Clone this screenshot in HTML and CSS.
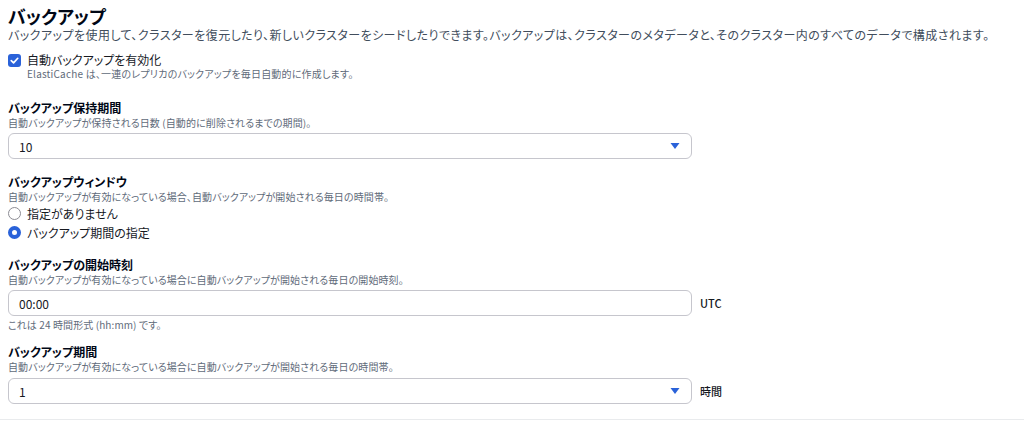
FILE: index.html
```html
<!DOCTYPE html>
<html lang="ja">
<head>
<meta charset="utf-8">
<link rel="stylesheet" href="styles.css">
</head>
<body>
<div class="page">
  <h1 class="title">バックアップ</h1>
  <p class="desc">バックアップを使用して、クラスターを復元したり、新しいクラスターをシードしたりできます。バックアップは、クラスターのメタデータと、そのクラスター内のすべてのデータで構成されます。</p>

  <div class="check-row">
    <span class="checkbox">
      <svg viewBox="0 0 14 14" width="14" height="14"><path d="M3.5 7.2 L6 9.6 L10.5 4.6" fill="none" stroke="#fff" stroke-width="1.8" stroke-linecap="round" stroke-linejoin="round"/></svg>
    </span>
    <span class="check-label">自動バックアップを有効化</span>
  </div>
  <div class="check-sub">ElastiCache は、一連のレプリカのバックアップを毎日自動的に作成します。</div>

  <div class="field f1">
    <div class="label">バックアップ保持期間</div>
    <div class="hint">自動バックアップが保持される日数 (自動的に削除されるまでの期間)。</div>
    <div class="control-row">
      <div class="select">
        <span class="value">10</span>
        <svg class="caret" viewBox="0 0 10 8" width="10" height="8"><path d="M0.5 1 L9.5 1 L5 7 Z" fill="#2a62d9"/></svg>
      </div>
    </div>
  </div>

  <div class="field f2">
    <div class="label">バックアップウィンドウ</div>
    <div class="hint">自動バックアップが有効になっている場合、自動バックアップが開始される毎日の時間帯。</div>
    <div class="radio-row"><span class="radio"></span><span class="radio-label">指定がありません</span></div>
    <div class="radio-row"><span class="radio checked"></span><span class="radio-label">バックアップ期間の指定</span></div>
  </div>

  <div class="field f3">
    <div class="label">バックアップの開始時刻</div>
    <div class="hint">自動バックアップが有効になっている場合に自動バックアップが開始される毎日の開始時刻。</div>
    <div class="control-row">
      <div class="input"><span class="value">00:00</span></div>
      <span class="unit">UTC</span>
    </div>
    <div class="hint after">これは 24 時間形式 (hh:mm) です。</div>
  </div>

  <div class="field f4">
    <div class="label">バックアップ期間</div>
    <div class="hint">自動バックアップが有効になっている場合に自動バックアップが開始される毎日の時間帯。</div>
    <div class="control-row">
      <div class="select">
        <span class="value">1</span>
        <svg class="caret" viewBox="0 0 10 8" width="10" height="8"><path d="M0.5 1 L9.5 1 L5 7 Z" fill="#2a62d9"/></svg>
      </div>
      <span class="unit">時間</span>
    </div>
  </div>
</div>
<div class="divider"></div>
</body>
</html>
```
FILE: styles.css
```css
html, body {
  margin: 0;
  padding: 0;
  background: #ffffff;
}
body {
  font-family: "Noto Sans CJK JP", "Noto Sans", sans-serif;
  color: #16191f;
  font-feature-settings: "palt";
}
.page {
  padding: 4px 8px 0;
}
.title {
  margin: 0;
  font-size: 18px;
  line-height: 24px;
  font-weight: 700;
  color: #000716;
}
.desc {
  margin: 0;
  font-size: 12px;
  line-height: 14px;
  letter-spacing: 0.45px;
  color: #414d5c;
}
.check-row {
  margin-top: 10px;
  display: flex;
  align-items: center;
  gap: 6px;
  height: 16px;
}
.checkbox {
  width: 13px;
  height: 13px;
  border-radius: 3px;
  background: #2a62d9;
  display: flex;
  align-items: center;
  justify-content: center;
}
.checkbox svg {
  width: 13px;
  height: 13px;
}
.check-label {
  font-size: 12px;
  line-height: 16px;
  color: #16191f;
}
.check-sub {
  margin-left: 19px;
  font-size: 10px;
  line-height: 12px;
  letter-spacing: 0.2px;
  color: #5f6b7a;
}
.field .label {
  font-size: 12px;
  line-height: 16px;
  font-weight: 700;
  color: #000716;
}
.hint {
  font-size: 10px;
  line-height: 14px;
  letter-spacing: 0.1px;
  color: #5f6b7a;
}
.f1 { margin-top: 20px; }
.f2 { margin-top: 15px; }
.f3 { margin-top: 15px; }
.f4 { margin-top: 12px; }
.control-row {
  margin-top: 3px;
  display: flex;
  align-items: center;
  gap: 8px;
}
.f4 .control-row { margin-top: 4px; }
.select, .input {
  box-sizing: border-box;
  width: 684px;
  height: 26px;
  border: 1px solid #c6c6cd;
  border-radius: 6px;
  display: flex;
  align-items: center;
  justify-content: space-between;
  padding: 0 11px 0 10px;
  background: #fff;
}
.value {
  font-size: 12px;
  color: #16191f;
}
.caret {
  display: block;
}
.unit {
  font-size: 11px;
  font-weight: 500;
  color: #16191f;
}
.hint.after {
  margin-top: 2px;
}
.radio-row {
  height: 19px;
  display: flex;
  align-items: center;
  gap: 6px;
}
.radio {
  box-sizing: border-box;
  width: 13px;
  height: 13px;
  border-radius: 50%;
  border: 1px solid #8c8c94;
  background: #fff;
}
.radio.checked {
  border: 4px solid #2a62d9;
}
.radio-label {
  font-size: 12px;
  color: #16191f;
}
.divider {
  margin-top: 15px;
  height: 1px;
  background: #e9ebed;
}
```
